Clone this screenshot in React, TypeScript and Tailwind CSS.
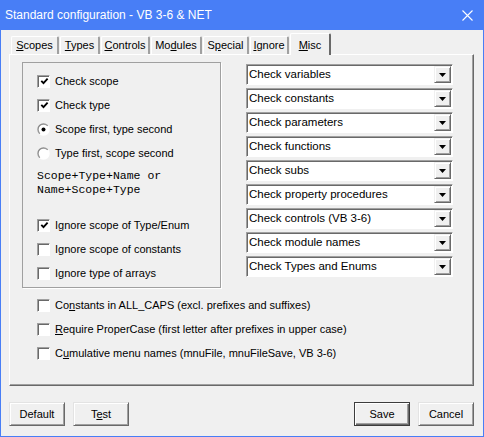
import React from 'react';

type Accel = { pre: string; acc: string; post: string };

const tabs: (Accel & { w: string; active?: boolean })[] = [
    { pre: '', acc: 'S', post: 'copes', w: 'w-[48px]' },
    { pre: '', acc: 'T', post: 'ypes', w: 'w-[40px]' },
    { pre: '', acc: 'C', post: 'ontrols', w: 'w-[49px]' },
    { pre: 'Mo', acc: 'd', post: 'ules', w: 'w-[51px]' },
    { pre: 'S', acc: 'p', post: 'ecial', w: 'w-[46px]' },
    { pre: '', acc: 'I', post: 'gnore', w: 'w-[39px]' },
    { pre: '', acc: 'M', post: 'isc', w: 'w-[41px]', active: true },
];

const dropdowns = [
    'Check variables',
    'Check constants',
    'Check parameters',
    'Check functions',
    'Check subs',
    'Check property procedures',
    'Check controls (VB 3-6)',
    'Check module names',
    'Check Types and Enums',
];

const Label: React.FC<Accel> = ({ pre, acc, post }) => (
    <span>{pre}<u className="underline-offset-[1px]">{acc}</u>{post}</span>
);

const CheckBox: React.FC<{ checked?: boolean; children: React.ReactNode }> = ({ checked, children }) => (
    <div className="h-[24px] flex items-center gap-[5px]">
        <span className="w-[13px] h-[13px] bg-white border border-t-[#a0a0a0] border-l-[#a0a0a0] border-r-white border-b-white shadow-[inset_1px_1px_0_#696969] flex items-center justify-center shrink-0">
            {checked && (
                <svg width="9" height="9" viewBox="0 0 9 9" className="ml-[1px] mt-[1px]">
                    <path d="M1.3 3.8 L3.5 6.2 L7.6 1.6" stroke="#000" strokeWidth="1.8" fill="none" />
                </svg>
            )}
        </span>
        <span className="whitespace-nowrap">{children}</span>
    </div>
);

const Radio: React.FC<{ checked?: boolean; id: string; children: React.ReactNode }> = ({ checked, id, children }) => (
    <div className="h-[24px] flex items-center gap-[5px]">
        <svg width="13" height="13" viewBox="0 0 13 13" className="shrink-0">
            <defs>
                <linearGradient id={id} x1="0" y1="0" x2="1" y2="1">
                    <stop offset="0" stopColor="#808080" />
                    <stop offset="0.5" stopColor="#a0a0a0" />
                    <stop offset="0.55" stopColor="#ffffff" />
                    <stop offset="1" stopColor="#ffffff" />
                </linearGradient>
            </defs>
            <circle cx="6.5" cy="6.5" r="5.5" fill="#fff" stroke={`url(#${id})`} strokeWidth="1.4" />
            {checked && <circle cx="6.5" cy="6.5" r="2" fill="#000" />}
        </svg>
        <span className="whitespace-nowrap">{children}</span>
    </div>
);

const Dropdown: React.FC<{ text: string }> = ({ text }) => (
    <div className="h-[21px] w-[207px] bg-white border border-t-[#a0a0a0] border-l-[#a0a0a0] border-r-white border-b-white shadow-[inset_1px_1px_0_#696969] flex items-center">
        <span className="flex-1 pl-[2px] whitespace-nowrap text-[11.5px]">{text}</span>
        <span className="w-[17px] h-[17px] mr-[1px] bg-[#f0f0f0] border border-t-[#f0f0f0] border-l-[#f0f0f0] border-r-[#696969] border-b-[#696969] shadow-[inset_1px_1px_0_#fff,inset_-1px_-1px_0_#a0a0a0] flex items-center justify-center">
            <svg width="7" height="4" viewBox="0 0 7 4">
                <polygon points="0,0 7,0 3.5,4" fill="#000" />
            </svg>
        </span>
    </div>
);

const Button: React.FC<{ isDefault?: boolean; children: React.ReactNode }> = ({ isDefault, children }) => (
    <button
        className={
            isDefault
                ? 'w-[56px] h-[24px] bg-[#f0f0f0] border border-[#3c3c3c] shadow-[inset_1px_1px_0_#fff,inset_-1px_-1px_0_#696969,inset_-2px_-2px_0_#a0a0a0] flex items-center justify-center'
                : 'w-[56px] h-[24px] bg-[#f0f0f0] border border-t-[#e3e3e3] border-l-[#e3e3e3] border-r-[#696969] border-b-[#696969] shadow-[inset_1px_1px_0_#fff,inset_-1px_-1px_0_#a0a0a0] flex items-center justify-center'
        }
    >
        {children}
    </button>
);

export default function App() {
    return (
        <div className="w-[484px] h-[437px] bg-[#487ef6] px-[1px] pb-[1px] flex flex-col font-['Liberation_Sans',Arial,sans-serif] text-[11px] text-black">
            <div className="h-[30px] flex items-center justify-between pl-[4px] pr-[10px] text-white text-[12px]">
                <span>Standard configuration - VB 3-6 &amp; NET</span>
                <svg width="11" height="11" viewBox="0 0 11 11">
                    <path d="M0.5 0.5 L10.5 10.5 M10.5 0.5 L0.5 10.5" stroke="#fff" strokeWidth="1.1" />
                </svg>
            </div>

            <div className="flex-1 bg-[#f0f0f0] pl-[8px] pt-[3px]">
                <div className="flex items-end gap-[1px] pl-[2px] h-[21px]">
                    {tabs.map(t => (
                        <div
                            key={t.acc + t.post}
                            className={
                                t.active
                                    ? `${t.w} h-[22px] -mb-[1px] relative z-10 bg-[#f0f0f0] border-t border-l border-t-white border-l-white border-r-2 border-r-[#696969] rounded-t-[2px] flex items-center justify-center pt-[2px]`
                                    : `${t.w} h-[18px] bg-[#f0f0f0] border-t border-l border-t-white border-l-white border-r-2 border-r-[#a0a0a0] rounded-t-[2px] flex items-center justify-center`
                            }
                        >
                            <Label pre={t.pre} acc={t.acc} post={t.post} />
                        </div>
                    ))}
                </div>

                <div className="w-[465px] h-[332px] border border-t-white border-l-white border-r-[#696969] border-b-[#696969] shadow-[inset_-1px_-1px_0_#a0a0a0] pl-[12px] pt-[7px]">
                    <div className="flex">
                        <div className="w-[199px] h-[226px] border border-[#a0a0a0] shadow-[1px_1px_0_#fff] pl-[14px] pt-[6px]">
                            <CheckBox checked>Check scope</CheckBox>
                            <CheckBox checked>Check type</CheckBox>
                            <Radio checked id="r1">Scope first, type second</Radio>
                            <Radio id="r2">Type first, scope second</Radio>
                            <div className="mt-[4px] font-['Liberation_Mono','Courier_New',monospace] text-[11.5px] leading-[14px] whitespace-pre">
                                <div>Scope+Type+Name or</div>
                                <div>Name+Scope+Type</div>
                            </div>
                            <div className="mt-[16px]">
                                <CheckBox checked>Ignore scope of Type/Enum</CheckBox>
                                <CheckBox>Ignore scope of constants</CheckBox>
                                <CheckBox>Ignore type of arrays</CheckBox>
                            </div>
                        </div>
                        <div className="ml-[25px] mt-[2px] flex flex-col gap-[3px]">
                            {dropdowns.map(d => <Dropdown key={d} text={d} />)}
                        </div>
                    </div>

                    <div className="pl-[15px] mt-[5px]">
                        <CheckBox><Label pre="Co" acc="n" post="stants in ALL_CAPS (excl. prefixes and suffixes)" /></CheckBox>
                        <CheckBox><Label pre="" acc="R" post="equire ProperCase (first letter after prefixes in upper case)" /></CheckBox>
                        <CheckBox><Label pre="C" acc="u" post="mulative menu names (mnuFile, mnuFileSave, VB 3-6)" /></CheckBox>
                    </div>
                </div>

                <div className="mt-[16px] w-[465px] flex items-center">
                    <div className="flex gap-[8px]">
                        <Button>Default</Button>
                        <Button><Label pre="T" acc="e" post="st" /></Button>
                    </div>
                    <div className="ml-auto flex gap-[8px]">
                        <Button isDefault>Save</Button>
                        <Button>Cancel</Button>
                    </div>
                </div>
            </div>
        </div>
    );
}
